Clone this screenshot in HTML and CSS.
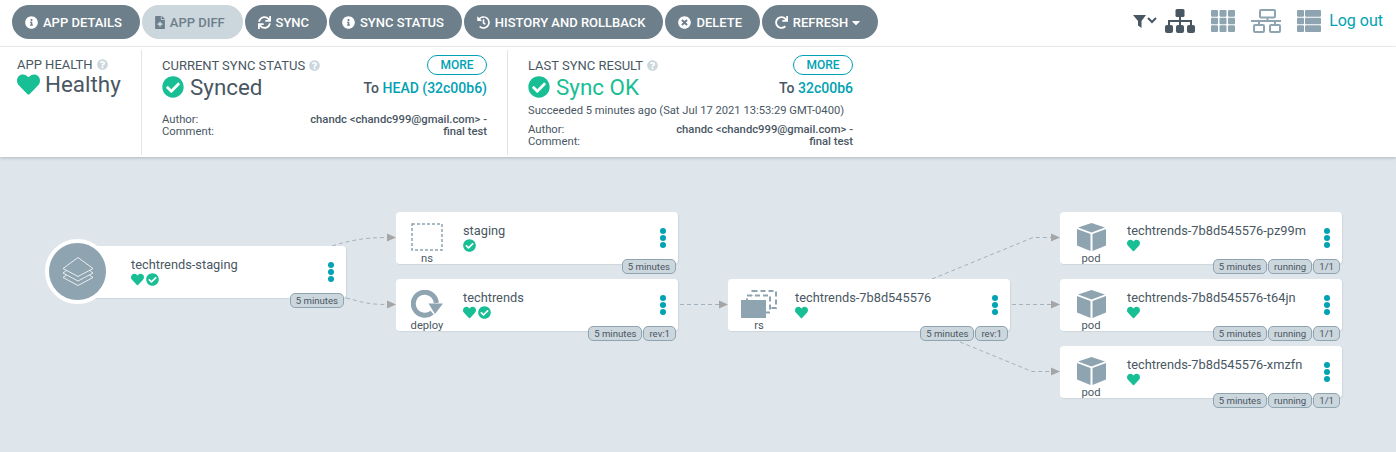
FILE: index.html
```html
<!DOCTYPE html>
<html lang="en">
  <head>
    <meta charset="UTF-8" />
    <title>techtrends-staging - Argo CD</title>
    <link rel="stylesheet" href="styles.css">
  </head>
  <body>
    <svg class="defs" width="0" height="0">
      <defs>
        <symbol id="i-heart" viewBox="0 0 512 512"><path d="M462.3 62.6C407.5 15.9 326 24.3 275.7 76.2L256 96.5l-19.7-20.3C186.1 24.3 104.5 15.9 49.7 62.6c-62.8 53.6-66.1 149.8-9.9 207.9l193.5 199.8c12.5 12.9 32.8 12.9 45.3 0l193.5-199.8c56.3-58.1 53-154.3-9.8-207.9z"/></symbol>
        <symbol id="i-check" viewBox="0 0 512 512"><path d="M504 256c0 136.967-111.033 248-248 248S8 392.967 8 256 119.033 8 256 8s248 111.033 248 248zM227.314 387.314l184-184c6.248-6.248 6.248-16.379 0-22.627l-22.627-22.627c-6.248-6.249-16.379-6.249-22.628 0L216 308.118l-70.059-70.059c-6.248-6.248-16.379-6.248-22.628 0l-22.627 22.627c-6.248 6.248-6.248 16.379 0 22.627l104 104c6.249 6.249 16.379 6.249 22.628.001z"/></symbol>
        <symbol id="i-info" viewBox="0 0 512 512"><path d="M256 8C119.043 8 8 119.083 8 256c0 136.997 111.043 248 248 248s248-111.003 248-248C504 119.083 392.957 8 256 8zm0 110c23.196 0 42 18.804 42 42s-18.804 42-42 42-42-18.804-42-42 18.804-42 42-42zm56 254c0 6.627-5.373 12-12 12h-88c-6.627 0-12-5.373-12-12v-24c0-6.627 5.373-12 12-12h12v-64h-12c-6.627 0-12-5.373-12-12v-24c0-6.627 5.373-12 12-12h64c6.627 0 12 5.373 12 12v100h12c6.627 0 12 5.373 12 12v24z"/></symbol>
        <symbol id="i-help" viewBox="0 0 512 512"><path d="M504 256c0 136.997-111.043 248-248 248S8 392.997 8 256C8 119.083 119.043 8 256 8s248 111.083 248 248zM262.655 90c-54.497 0-89.255 22.957-116.549 63.758-3.536 5.286-2.353 12.415 2.715 16.258l34.699 26.31c5.205 3.947 12.621 3.008 16.665-2.122 17.864-22.658 30.113-35.797 57.303-35.797 20.429 0 45.698 13.148 45.698 32.958 0 14.976-12.363 22.667-32.534 33.976C247.128 238.528 216 254.941 216 296v4c0 6.627 5.373 12 12 12h56c6.627 0 12-5.373 12-12v-1.333c0-28.462 83.186-29.647 83.186-106.667 0-58.002-60.165-102-116.531-102zM256 338c-25.365 0-46 20.635-46 46 0 25.364 20.635 46 46 46s46-20.636 46-46c0-25.365-20.635-46-46-46z"/></symbol>
        <symbol id="i-cube" viewBox="0 0 29 28"><path d="M14.500 0 28 4.500 14.500 9.500 1 4.500Z"/><path d="M0 6 13.500 11V28L0 22.500Z"/><path d="M29 6 15.500 11V28L29 22.500Z"/></symbol>
      </defs>
    </svg>

    <div class="toolbar">
      <div class="actions">
        <a class="btn"><svg viewBox="0 0 512 512"><use href="#i-info"/></svg>APP DETAILS</a>
        <a class="btn btn--off"><svg class="file" viewBox="0 0 384 512"><path d="M377 105L279.100 7c-4.500-4.500-10.600-7-17-7H256v128h128v-6.100c0-6.300-2.500-12.400-7-16.900zm-153 31V0H24C10.700 0 0 10.700 0 24v464c0 13.300 10.700 24 24 24h336c13.300 0 24-10.700 24-24V160H248c-13.200 0-24-10.800-24-24zm64 160v48c0 4.400-3.600 8-8 8h-56v56c0 4.400-3.600 8-8 8h-48c-4.400 0-8-3.600-8-8v-56h-56c-4.400 0-8-3.600-8-8v-48c0-4.400 3.600-8 8-8h56v-56c0-4.400 3.600-8 8-8h48c4.400 0 8 3.600 8 8v56h56c4.400 0 8 3.600 8 8z"/></svg>APP DIFF</a>
        <a class="btn"><svg viewBox="0 0 512 512"><path d="M440.650 12.570l4 82.770A247.160 247.160 0 0 0 255.830 8C134.730 8 33.910 94.920 12.290 209.820A12 12 0 0 0 24.090 224h49.050a12 12 0 0 0 11.670-9.260 175.910 175.910 0 0 1 317-56.940l-101.460-4.860a12 12 0 0 0-12.570 12v47.410a12 12 0 0 0 12 12H500a12 12 0 0 0 12-12V12a12 12 0 0 0-12-12h-47.370a12 12 0 0 0-11.980 12.570zM255.830 432a175.610 175.610 0 0 1-146-77.800l101.800 4.870a12 12 0 0 0 12.570-12v-47.400a12 12 0 0 0-12-12H12a12 12 0 0 0-12 12V500a12 12 0 0 0 12 12h47.350a12 12 0 0 0 12-12.600l-4.150-82.570A247.170 247.170 0 0 0 255.830 504c121.110 0 221.930-86.920 243.550-201.820a12 12 0 0 0-11.800-14.180h-49.050a12 12 0 0 0-11.670 9.260A175.860 175.860 0 0 1 255.830 432z"/></svg>SYNC</a>
        <a class="btn"><svg viewBox="0 0 512 512"><use href="#i-info"/></svg>SYNC STATUS</a>
        <a class="btn"><svg viewBox="0 0 512 512"><path d="M504 255.531c.253 136.640-111.180 248.372-247.820 248.468-59.015.042-113.223-20.530-155.822-54.911-11.077-8.940-11.905-25.541-1.839-35.607l11.267-11.267c8.609-8.609 22.353-9.551 31.891-1.984C173.062 425.135 212.781 440 256 440c101.705 0 184-82.311 184-184 0-101.705-82.311-184-184-184-48.814 0-93.149 18.969-126.068 49.932l50.754 50.754c10.080 10.080 2.941 27.314-11.313 27.314H24c-8.837 0-16-7.163-16-16V38.627c0-14.254 17.234-21.393 27.314-11.314l49.372 49.372C129.209 34.136 189.552 8 256 8c136.810 0 247.747 110.780 248 247.531zm-180.912 78.784l9.823-12.630c8.138-10.463 6.253-25.542-4.210-33.679L288 256.349V152c0-13.255-10.745-24-24-24h-16c-13.255 0-24 10.745-24 24v135.651l65.409 50.874c10.463 8.137 25.541 6.253 33.679-4.210z"/></svg>HISTORY AND ROLLBACK</a>
        <a class="btn"><svg viewBox="0 0 512 512"><path d="M256 8C119 8 8 119 8 256s111 248 248 248 248-111 248-248S393 8 256 8zm121.600 313.100c4.700 4.700 4.700 12.300 0 17L338 377.600c-4.700 4.700-12.300 4.700-17 0L256 312l-65.100 65.600c-4.700 4.700-12.300 4.700-17 0L134.400 338c-4.700-4.700-4.700-12.300 0-17l65.600-65-65.600-65.100c-4.700-4.700-4.700-12.300 0-17l39.600-39.600c4.700-4.700 12.300-4.700 17 0l65 65.700 65.100-65.600c4.700-4.700 12.300-4.700 17 0l39.600 39.600c4.700 4.700 4.700 12.300 0 17L312 256l65.600 65.100z"/></svg>DELETE</a>
        <a class="btn"><svg viewBox="0 0 512 512"><path d="M500.330 0h-47.410a12 12 0 0 0-12 12.570l4 82.760A247.420 247.420 0 0 0 256 8C119.340 8 7.900 119.530 8 256.190 8.100 393.070 119.100 504 256 504a247.100 247.100 0 0 0 166.180-63.910 12 12 0 0 0 .48-17.430l-34-34a12 12 0 0 0-16.380-.55A176 176 0 1 1 402.100 157.800l-101.530-4.870a12 12 0 0 0-12.570 12v47.410a12 12 0 0 0 12 12h200.330a12 12 0 0 0 12-12V12a12 12 0 0 0-12-12z"/></svg>REFRESH<svg class="caret" viewBox="0 0 320 512"><path d="M31.300 192h257.300c17.800 0 26.700 21.500 14.100 34.100L174.100 354.800c-7.800 7.800-20.500 7.800-28.300 0L17.200 226.100C4.600 213.500 13.500 192 31.300 192z"/></svg></a>
      </div>
      <div class="views">
        <svg class="view view--filter" viewBox="0 0 25 13"><path class="dark" d="M0 0H13L8.500 6V13L5 10.500V6Z"/><path class="chev" d="M15 3 19 7 23 3"/></svg>
        <svg class="view view--tree" viewBox="0 0 30 24"><g class="dark"><rect x="10.500" y="0" width="9" height="8" rx="1.500"/><rect x="14" y="7" width="2" height="9"/><rect x="3" y="11" width="24" height="2"/><rect x="3" y="11" width="2" height="5"/><rect x="25" y="11" width="2" height="5"/><rect x="0" y="16" width="8" height="8" rx="2"/><rect x="11" y="16" width="8" height="8" rx="2"/><rect x="22" y="16" width="8" height="8" rx="2"/></g></svg>
        <svg class="view view--grid" viewBox="0 0 24 22"><g class="soft"><rect width="7" height="6.700" rx="1"/><rect x="8.500" width="7" height="6.700" rx="1"/><rect x="17" width="7" height="6.700" rx="1"/><rect y="7.650" width="7" height="6.700" rx="1"/><rect x="8.500" y="7.650" width="7" height="6.700" rx="1"/><rect x="17" y="7.650" width="7" height="6.700" rx="1"/><rect y="15.300" width="7" height="6.700" rx="1"/><rect x="8.500" y="15.300" width="7" height="6.700" rx="1"/><rect x="17" y="15.300" width="7" height="6.700" rx="1"/></g></svg>
        <svg class="view view--net" viewBox="0 0 30 24"><g class="line"><rect x="9" y="1" width="15" height="7.500" rx="1"/><path d="M16.500 8.500V12M0 12H30M8 12V16M24 12V16"/><rect x="3" y="16" width="10" height="7" rx="1"/><rect x="19" y="16" width="10" height="7" rx="1"/></g></svg>
        <svg class="view view--list" viewBox="0 0 24 22"><g class="soft"><rect width="7" height="6.700" rx="1"/><rect x="8" width="16" height="6.700" rx="1"/><rect y="7.650" width="7" height="6.700" rx="1"/><rect x="8" y="7.650" width="16" height="6.700" rx="1"/><rect y="15.300" width="7" height="6.700" rx="1"/><rect x="8" y="15.300" width="16" height="6.700" rx="1"/></g></svg>
        <a class="logout">Log out</a>
      </div>
    </div>

    <div class="status">
      <div class="status__col status__col--health">
        <div class="status__title">APP HEALTH<svg class="help"><use href="#i-help"/></svg></div>
        <div class="status__big"><svg class="big-icon big-icon--heart"><use href="#i-heart"/></svg>Healthy</div>
      </div>
      <div class="status__col status__col--sync">
        <div class="status__head">
          <div>
            <div class="status__title status__title--low">CURRENT SYNC STATUS<svg class="help"><use href="#i-help"/></svg></div>
            <div class="status__big"><svg class="big-icon"><use href="#i-check"/></svg>Synced</div>
          </div>
          <div class="status__right">
            <a class="more">MORE</a>
            <div class="to">To <a>HEAD (32c00b6)</a></div>
          </div>
        </div>
        <div class="meta meta--sync">
          <div class="meta__labels">Author:<br>Comment:</div>
          <div class="meta__value">chandc &lt;chandc999@gmail.com&gt; -<br>final test</div>
        </div>
      </div>
      <div class="status__col status__col--sync">
        <div class="status__head">
          <div>
            <div class="status__title status__title--low">LAST SYNC RESULT<svg class="help"><use href="#i-help"/></svg></div>
            <div class="status__big status__big--ok"><svg class="big-icon"><use href="#i-check"/></svg>Sync OK</div>
          </div>
          <div class="status__right">
            <a class="more">MORE</a>
            <div class="to">To <a>32c00b6</a></div>
          </div>
        </div>
        <div class="succeeded">Succeeded 5 minutes ago (Sat Jul 17 2021 13:53:29 GMT-0400)</div>
        <div class="meta">
          <div class="meta__labels">Author:<br>Comment:</div>
          <div class="meta__value">chandc &lt;chandc999@gmail.com&gt; -<br>final test</div>
        </div>
      </div>
    </div>

    <div class="canvas">
      <svg class="edges" width="1396" height="295" viewBox="0 157 1396 295">
        <g class="edge">
          <path d="M332 246C352 240 365 237.500 387 237.500"/>
          <path d="M346 298C362 302 368 304.500 387 304.500"/>
          <path d="M680 304.500H719"/>
          <path d="M932 279 1033 237.500H1051"/>
          <path d="M1012 304.500H1051"/>
          <path d="M960 342 1032 371.500H1051"/>
        </g>
        <g class="arrow">
          <path d="M387 233.500 396 237.500 387 241.500Z"/>
          <path d="M387 300.500 396 304.500 387 308.500Z"/>
          <path d="M719 300.500 728 304.500 719 308.500Z"/>
          <path d="M1051 233.500 1060 237.500 1051 241.500Z"/>
          <path d="M1051 300.500 1060 304.500 1051 308.500Z"/>
          <path d="M1051 367.500 1060 371.500 1051 375.500Z"/>
        </g>
      </svg>

      <div class="node node--app">
        <div class="node__text">
          <div class="node__name">techtrends-staging</div>
          <div class="node__state"><svg><use href="#i-heart"/></svg><svg><use href="#i-check"/></svg></div>
        </div>
        <div class="dots"><i></i><i></i><i></i></div>
        <div class="tags"><span>5 minutes</span></div>
      </div>
      <div class="app-circle">
        <svg viewBox="0 0 32 30"><g class="layers"><path d="M16 .5 31 11.500 16 19.500 1 11.500Z"/><path d="M4.500 13.500 1 16 16 24 31 16 27.500 13.500"/><path d="M4.500 18 1 20.500 16 28.500 31 20.500 27.500 18"/></g></svg>
      </div>

      <div class="node node--ns">
        <div class="node__kind">
          <svg class="kind-icon" viewBox="0 0 32 28"><rect class="ns-box" x="1" y="1" width="30" height="26"/></svg>
          <span class="kind">ns</span>
        </div>
        <div class="node__text">
          <div class="node__name">staging</div>
          <div class="node__state"><svg><use href="#i-check"/></svg></div>
        </div>
        <div class="dots"><i></i><i></i><i></i></div>
        <div class="tags"><span>5 minutes</span></div>
      </div>

      <div class="node node--deploy">
        <div class="node__kind">
          <svg class="kind-icon" viewBox="0 0 32 28"><path class="ring" d="M21.200 22.600A11.500 11.500 0 1 1 25.300 13"/><path class="ring-tip" d="M17.500 13.500H32L24 24Z"/></svg>
          <span class="kind">deploy</span>
        </div>
        <div class="node__text">
          <div class="node__name">techtrends</div>
          <div class="node__state"><svg><use href="#i-heart"/></svg><svg><use href="#i-check"/></svg></div>
        </div>
        <div class="dots"><i></i><i></i><i></i></div>
        <div class="tags"><span>5 minutes</span><span>rev:1</span></div>
      </div>

      <div class="node node--rs">
        <div class="node__kind">
          <svg class="kind-icon kind-icon--rs" viewBox="0 0 36 28"><rect class="rs-back" x="11.500" y="1" width="23.500" height="17"/><rect class="rs-back" x="6" y="5.500" width="23" height="17"/><rect class="rs-front" x="0" y="10" width="25" height="18"/></svg>
          <span class="kind">rs</span>
        </div>
        <div class="node__text">
          <div class="node__name">techtrends-7b8d545576</div>
          <div class="node__state"><svg><use href="#i-heart"/></svg></div>
        </div>
        <div class="dots"><i></i><i></i><i></i></div>
        <div class="tags"><span>5 minutes</span><span>rev:1</span></div>
      </div>

      <div class="node node--pod1">
        <div class="node__kind"><svg class="kind-icon kind-icon--cube"><use href="#i-cube"/></svg><span class="kind">pod</span></div>
        <div class="node__text">
          <div class="node__name">techtrends-7b8d545576-pz99m</div>
          <div class="node__state"><svg><use href="#i-heart"/></svg></div>
        </div>
        <div class="dots"><i></i><i></i><i></i></div>
        <div class="tags"><span>5 minutes</span><span>running</span><span>1/1</span></div>
      </div>

      <div class="node node--pod2">
        <div class="node__kind"><svg class="kind-icon kind-icon--cube"><use href="#i-cube"/></svg><span class="kind">pod</span></div>
        <div class="node__text">
          <div class="node__name">techtrends-7b8d545576-t64jn</div>
          <div class="node__state"><svg><use href="#i-heart"/></svg></div>
        </div>
        <div class="dots"><i></i><i></i><i></i></div>
        <div class="tags"><span>5 minutes</span><span>running</span><span>1/1</span></div>
      </div>

      <div class="node node--pod3">
        <div class="node__kind"><svg class="kind-icon kind-icon--cube"><use href="#i-cube"/></svg><span class="kind">pod</span></div>
        <div class="node__text">
          <div class="node__name">techtrends-7b8d545576-xmzfn</div>
          <div class="node__state"><svg><use href="#i-heart"/></svg></div>
        </div>
        <div class="dots"><i></i><i></i><i></i></div>
        <div class="tags"><span>5 minutes</span><span>running</span><span>1/1</span></div>
      </div>
    </div>
  </body>
</html>
```

FILE: styles.css
```css
* {
  box-sizing: border-box;
}
html,
body {
  height: 100%;
}
body {
  margin: 0;
  display: flex;
  flex-direction: column;
  overflow: hidden;
  background-color: #dee6eb;
  color: #495763;
  font-family: Roboto, "Liberation Sans", sans-serif;
}
.defs {
  position: absolute;
}

/* top bar */
.toolbar {
  display: flex;
  justify-content: space-between;
  height: 47px;
  padding: 5px 13px 0 12px;
  background-color: #fff;
  border-bottom: 1px solid #eff2f4;
}
.actions {
  display: flex;
  gap: 2px;
}
.btn {
  display: flex;
  align-items: center;
  height: 34px;
  padding: 0 17.85px 0 13px;
  border-radius: 17px;
  background-color: #6d7f8b;
  color: #fff;
  font-size: 13px;
  font-weight: 500;
  white-space: nowrap;
}
.btn svg {
  width: 13px;
  height: 13px;
  margin-right: 5px;
  fill: #fff;
}
.btn .file {
  width: 10px;
}
.btn .caret {
  width: 8px;
  margin: 0 0 0 4px;
}
.btn--off {
  background-color: #ccd6dd;
  color: #6d7f8b;
}
.btn--off svg {
  fill: #6d7f8b;
}
.views {
  display: flex;
  align-items: flex-start;
}
.view {
  display: block;
}
.view--filter {
  width: 25px;
  height: 13px;
  margin: 10px 7px 0 0;
}
.view--tree {
  width: 30px;
  height: 24px;
  margin: 4px 16px 0 0;
}
.view--grid {
  width: 24px;
  height: 22px;
  margin: 5px 16px 0 0;
}
.view--net {
  width: 30px;
  height: 24px;
  margin: 4px 16px 0 0;
}
.view--list {
  width: 24px;
  height: 22px;
  margin: 5px 8px 0 0;
}
.dark {
  fill: #495763;
}
.soft {
  fill: #8fa4b1;
}
.chev {
  fill: none;
  stroke: #495763;
  stroke-width: 2;
}
.line {
  fill: none;
  stroke: #8fa4b1;
  stroke-width: 2;
}
.logout {
  margin-top: 7px;
  color: #00a2b3;
  font-size: 16px;
  line-height: 18px;
}

/* status panel */
.status {
  position: relative;
  display: flex;
  height: 110px;
  padding-top: 3px;
  background-color: #fff;
  box-shadow: 0 1px 3px rgba(73, 87, 99, 0.3);
}
.status__col {
  height: 105px;
  border-right: 1px solid #dee6eb;
}
.status__col--health {
  width: 142px;
  padding: 5px 0 0 17px;
}
.status__col--health .status__big {
  margin-top: -2px;
}
.status__col--sync {
  width: 366px;
  padding: 5px 20px 0 20px;
}
.status__col:last-child {
  width: 365px;
  border-right: none;
}
.status__title {
  display: flex;
  align-items: center;
  gap: 4px;
  height: 18px;
  color: #495763;
  font-size: 13px;
  white-space: pre;
}
.status__title--low {
  margin-top: 1px;
}
.help {
  width: 11px;
  height: 11px;
  fill: #ccd6dd;
}
.status__big {
  display: flex;
  align-items: center;
  height: 26px;
  font-size: 22.4px;
}
.status__big--ok {
  color: #18be94;
}
.big-icon {
  width: 22px;
  height: 22px;
  margin-right: 6px;
  fill: #18be94;
}
.big-icon--heart {
  width: 23px;
  height: 23px;
  margin-right: 5px;
}
.status__head {
  display: flex;
  justify-content: space-between;
}
.status__right {
  display: flex;
  flex-direction: column;
  align-items: flex-end;
}
.more {
  display: block;
  width: 60px;
  height: 20px;
  border: 1px solid #00a2b3;
  border-radius: 10px;
  color: #00a2b3;
  font-size: 12px;
  font-weight: 500;
  line-height: 18px;
  text-align: center;
}
.to {
  margin-top: 4px;
  font-size: 14px;
  font-weight: 500;
  line-height: 18px;
}
.to a {
  color: #00a2b3;
}
.succeeded {
  margin-top: 4px;
  font-size: 11.2px;
  line-height: 14px;
}
.meta {
  display: flex;
  justify-content: space-between;
  margin-top: 6px;
  font-size: 11.25px;
  line-height: 12px;
}
.meta--sync {
  margin-top: 14px;
}
.meta__value {
  font-weight: 500;
  text-align: right;
}

/* resource graph */
.canvas {
  position: relative;
  flex: 1;
}
.edges {
  position: absolute;
  top: 0;
  left: 0;
}
.edge path {
  fill: none;
  stroke: #a3b2bc;
  stroke-width: 1;
  stroke-dasharray: 4 3;
}
.arrow path {
  fill: #a5a5a5;
}
.node {
  position: absolute;
  display: flex;
  width: 282px;
  height: 52px;
  border-radius: 4px;
  background-color: #fff;
  box-shadow: 1px 1px 1px #ccd6dd;
}
.node--app {
  left: 64px;
  top: 89px;
  padding-left: 62px;
}
.node--ns {
  left: 396px;
  top: 55px;
}
.node--deploy {
  left: 396px;
  top: 122px;
}
.node--rs {
  left: 728px;
  top: 122px;
}
.node--pod1 {
  left: 1060px;
  top: 55px;
}
.node--pod2 {
  left: 1060px;
  top: 122px;
}
.node--pod3 {
  left: 1060px;
  top: 189px;
}
.node__kind {
  display: flex;
  flex-direction: column;
  align-items: center;
  justify-content: flex-end;
  width: 62px;
  flex: none;
}
.kind {
  margin-bottom: -1px;
  font-size: 11.2px;
  line-height: 13px;
}
.ns-box {
  fill: none;
  stroke: #8fa4b1;
  stroke-width: 1.5;
  stroke-dasharray: 3 2;
}
.kind-icon {
  display: block;
  width: 32px;
  height: 28px;
  margin-bottom: 1px;
}
.kind-icon--rs {
  width: 36px;
  flex: none;
}
.kind-icon--cube {
  width: 29px;
  fill: #8fa4b1;
}
.ring {
  fill: none;
  stroke: #8fa4b1;
  stroke-width: 5;
}
.ring-tip {
  fill: #8fa4b1;
}
.rs-back {
  fill: #fff;
  stroke: #8fa4b1;
  stroke-width: 2;
  stroke-dasharray: 5 3;
}
.rs-front {
  fill: #8fa4b1;
}
.node__text {
  flex: 1;
  min-width: 0;
  padding: 11px 0 0 5px;
}
.node__name {
  font-size: 12.8px;
  line-height: 16px;
  white-space: nowrap;
}
.node__state {
  display: flex;
  gap: 2px;
  height: 14px;
}
.node__state svg {
  width: 13px;
  height: 13px;
  fill: #18be94;
}
.dots {
  display: flex;
  flex-direction: column;
  gap: 1px;
  flex: none;
  width: 30px;
  padding-top: 16px;
  padding-left: 12px;
}
.dots i {
  display: block;
  width: 6px;
  height: 6px;
  border-radius: 50%;
  background-color: #00a2b3;
}
.tags {
  position: absolute;
  right: 2px;
  bottom: -10px;
  display: flex;
  gap: 1px;
}
.tags span {
  display: block;
  height: 15px;
  padding: 0 5px;
  border: 1px solid #8fa4b1;
  border-radius: 5px;
  background-color: #ccd6dd;
  font-size: 9.6px;
  line-height: 13px;
}
.app-circle {
  position: absolute;
  left: 45px;
  top: 82px;
  display: flex;
  align-items: center;
  justify-content: center;
  width: 65px;
  height: 65px;
  border: 4px solid #fff;
  border-radius: 50%;
  background-color: #8fa4b1;
}
.app-circle svg {
  width: 32px;
  height: 30px;
}
.layers path {
  fill: none;
  stroke: #fff;
  stroke-width: 0.8;
}
```
